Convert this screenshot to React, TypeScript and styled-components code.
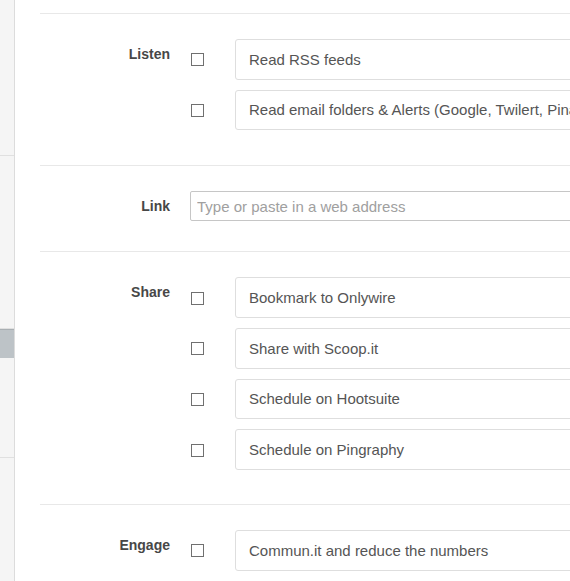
import React from "react";
import styled, { createGlobalStyle } from "styled-components";

const GlobalStyle = createGlobalStyle`
    html, body {
        margin: 0;
        padding: 0;
        background: #fff;
        overflow: hidden;
    }
    body {
        font-family: "Liberation Sans", Arial, sans-serif;
    }
`;

const Page = styled.div`
    display: flex;
    width: 570px;
    height: 581px;
    overflow: hidden;
`;

const Sidebar = styled.nav`
    flex: 0 0 14px;
    display: flex;
    flex-direction: column;
    background: #f5f5f5;
    border-right: 1px solid #dcdcdc;
`;

const NavItem = styled.div<{ h: number; active?: boolean }>`
    flex: 0 0 ${props => props.h}px;
    box-sizing: border-box;
    border-bottom: 1px solid ${props => props.active ? "#bdc3c7" : "#e0e0e0"};
    border-top: ${props => props.active ? "1px solid #a9afb3" : "none"};
    background: ${props => props.active ? "#bdc3c7" : "transparent"};
`;

const Main = styled.main`
    flex: 0 0 900px;
    padding: 13px 0 0 25px;
`;

const Section = styled.section<{ padBottom: number }>`
    display: grid;
    grid-template-columns: 130px 1fr;
    column-gap: 20px;
    align-items: start;
    border-top: 1px solid #e8e8e8;
    padding: 25px 0 ${props => props.padBottom}px;
`;

const Label = styled.label`
    padding-top: 5px;
    text-align: right;
    font-size: 14px;
    font-weight: bold;
    line-height: 20px;
    color: #474747;
`;

const Items = styled.div`
    display: flex;
    flex-direction: column;
    gap: 10px;
`;

const Row = styled.div`
    display: flex;
    align-items: center;
`;

const CheckCell = styled.div`
    flex: 0 0 45px;
    display: flex;
    align-items: center;
    padding-top: 1px;
`;

const Check = styled.span`
    display: block;
    width: 13px;
    height: 13px;
    margin-left: 1px;
    box-sizing: border-box;
    border: 1px solid #707070;
    background: #fff;
`;

const Task = styled.div`
    flex: 0 0 520px;
    height: 40.67px;
    box-sizing: border-box;
    display: flex;
    align-items: center;
    padding-left: 13px;
    border: 1px solid #dedede;
    border-radius: 3px;
    font-size: 15px;
    color: #555;
    white-space: nowrap;
    overflow: hidden;
`;

const UrlInput = styled.input`
    width: 520px;
    height: 30px;
    box-sizing: border-box;
    padding: 0 6px;
    border: 1px solid #c6c6c6;
    border-radius: 2px;
    font-family: "Liberation Sans", Arial, sans-serif;
    font-size: 15px;
    color: #555;
    outline: none;

    &::placeholder {
        color: #a0a0a0;
    }
`;

interface Group {
    label: string;
    tasks: string[];
}

const groups: Record<string, Group> = {
    listen: {
        label: "Listen",
        tasks: [
            "Read RSS feeds",
            "Read email folders & Alerts (Google, Twilert, Pinalerts)",
        ],
    },
    share: {
        label: "Share",
        tasks: [
            "Bookmark to Onlywire",
            "Share with Scoop.it",
            "Schedule on Hootsuite",
            "Schedule on Pingraphy",
        ],
    },
    engage: {
        label: "Engage",
        tasks: ["Commun.it and reduce the numbers"],
    },
};

function TaskSection({ group, padBottom = 34 }: { group: Group; padBottom?: number }) {
    return <Section padBottom={padBottom}>
        <Label>{group.label}</Label>
        <Items>
            {group.tasks.map(task =>
                <Row key={task}>
                    <CheckCell><Check /></CheckCell>
                    <Task>{task}</Task>
                </Row>
            )}
        </Items>
    </Section>;
}

export default function App() {
    return <>
        <GlobalStyle />
        <Page>
            <Sidebar>
                <NavItem h={156} />
                <NavItem h={173} />
                <NavItem h={29} active />
                <NavItem h={100} />
                <NavItem h={140} />
            </Sidebar>
            <Main>
                <TaskSection group={groups.listen} padBottom={35} />
                <Section padBottom={30}>
                    <Label>Link</Label>
                    <UrlInput placeholder="Type or paste in a web address" />
                </Section>
                <TaskSection group={groups.share} />
                <TaskSection group={groups.engage} />
            </Main>
        </Page>
    </>;
}
